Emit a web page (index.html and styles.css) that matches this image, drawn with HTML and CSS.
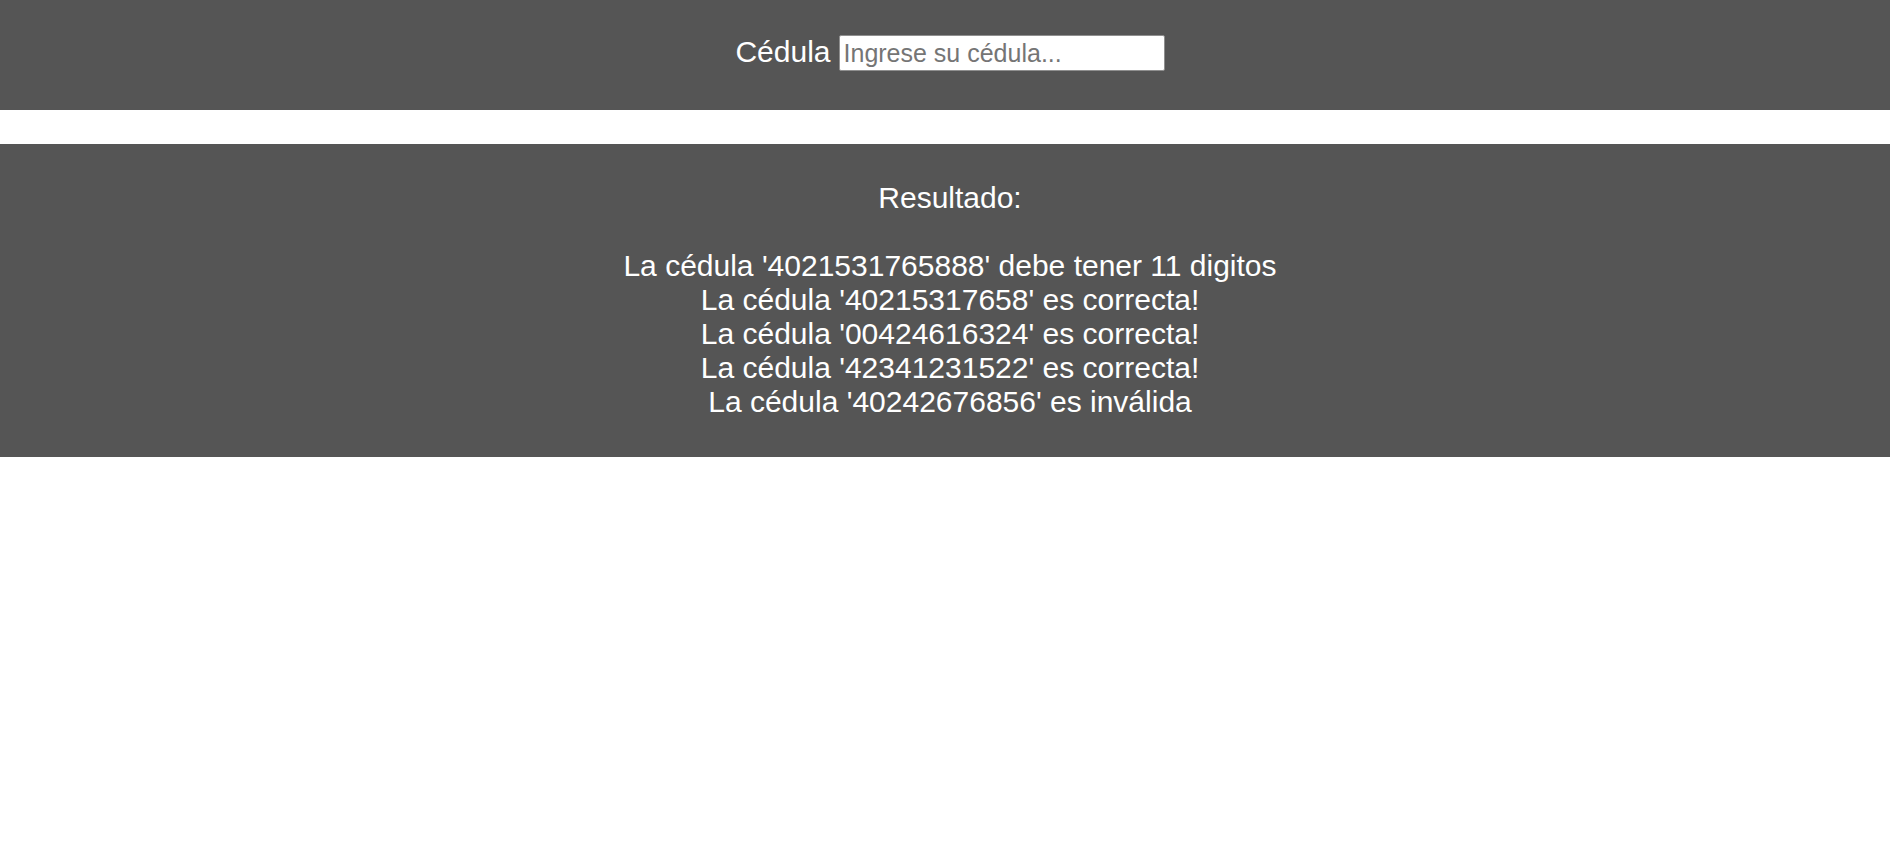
FILE: index.html
```html
<!DOCTYPE html>
<html lang="es">
<head>
<meta charset="utf-8">
<title>Validador de cédula</title>
<link rel="stylesheet" href="styles.css">
</head>
<body>
  <header class="bar search-bar">
    <label class="label" for="cedula">Cédula</label>
    <input class="input" id="cedula" type="text" placeholder="Ingrese su cédula...">
  </header>
  <section class="bar results">
    <div class="line">Resultado:</div>
    <div class="line blank">&nbsp;</div>
    <div class="line">La cédula '4021531765888' debe tener 11 digitos</div>
    <div class="line">La cédula '40215317658' es correcta!</div>
    <div class="line">La cédula '00424616324' es correcta!</div>
    <div class="line">La cédula '42341231522' es correcta!</div>
    <div class="line">La cédula '40242676856' es inválida</div>
  </section>
</body>
</html>
```

FILE: styles.css
```css
html, body {
  margin: 0;
  padding: 0;
  background: #ffffff;
}

body {
  font-family: "Liberation Sans", Arial, sans-serif;
  color: #ffffff;
}

.bar {
  background: #555555;
  padding-left: 10px;
  box-sizing: border-box;
}

.search-bar {
  height: 110px;
  display: flex;
  justify-content: center;
  align-items: flex-start;
  gap: 8px;
  padding-top: 35px;
}

.label {
  font-size: 30px;
  line-height: 36px;
  margin-top: -1px;
}

.input {
  width: 326px;
  height: 36px;
  box-sizing: border-box;
  border: 1px solid #8f8f8f;
  border-radius: 2px;
  background: #ffffff;
  padding: 0 4px;
  font-family: "Liberation Sans", Arial, sans-serif;
  font-size: 25px;
  color: #000000;
  margin: 0;
  outline: none;
}

.input::placeholder {
  color: #757575;
}

.results {
  margin-top: 34px;
  padding-top: 37px;
  padding-bottom: 38px;
  text-align: center;
  font-size: 30px;
  line-height: 34px;
}
```
